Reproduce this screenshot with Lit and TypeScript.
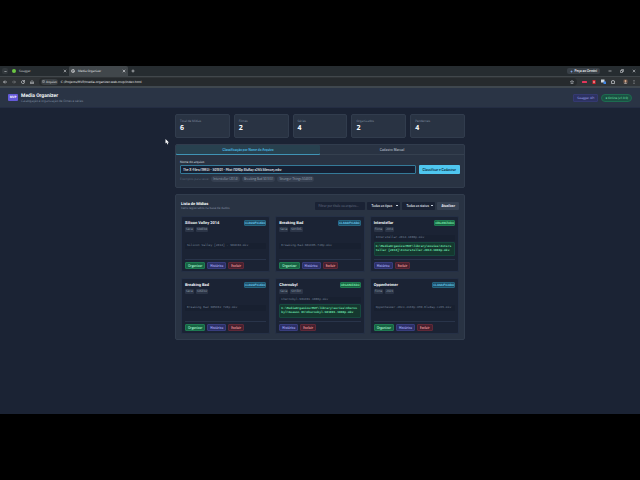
import { LitElement, html, css, svg, nothing } from "lit";
import { customElement, property } from "lit/decorators.js";

interface Media {
  title: string;
  tags: string[];
  file: string;
  path?: string;
}

const MEDIA: Media[] = [
  { title: "Silicon Valley 2014", tags: ["Série", "S04E04"], file: "Silicon Valley [2014] - S04E04.mkv" },
  { title: "Breaking Bad", tags: ["Série", "S01E05"], file: "Breaking.Bad.S01E05.720p.mkv" },
  {
    title: "Interstellar", tags: ["Filme", "2014"], file: "Interstellar.2014.1080p.mkv",
    path: "C:\\MediaOrganizerMVP\\library\\movies\\Interstellar [2014]\\Interstellar.2014.1080p.mkv",
  },
  { title: "Breaking Bad", tags: ["Série", "S05E02"], file: "Breaking Bad S05E02 720p.mkv" },
  {
    title: "Chernobyl", tags: ["Série", "S01E01"], file: "Chernobyl.S01E01.1080p.mkv",
    path: "C:\\MediaOrganizerMVP\\library\\series\\Chernobyl\\Season 01\\Chernobyl.S01E01.1080p.mkv",
  },
  { title: "Oppenheimer", tags: ["Filme", "2023"], file: "Oppenheimer.2023.2160p.UHD.BluRay.x265.mkv" },
];

const STATS: [string, number][] = [
  ["Total de Mídias", 6], ["Filmes", 2], ["Séries", 4], ["Organizados", 2], ["Pendentes", 4],
];

const reset = css`
  * { box-sizing: border-box; margin: 0; }
  button, input, select { font-family: inherit; font-size: 3px; line-height: 4px; color: inherit; border: 0; border-radius: 1px; padding: 0; background: none; }
  button { white-space: nowrap; }
  svg { display: block; fill: none; stroke: currentColor; flex: none; }
`;

@customElement("browser-chrome")
class BrowserChrome extends LitElement {
  static styles = [reset, css`
    :host { display: block; color: #c9ccd0; font-size: 3px; line-height: 4px; }
    .strip { display: flex; align-items: center; height: 10px; background: #262c30; padding: 0 4px 0 2px; }
    .drop { width: 6px; height: 6px; border-radius: 2px; background: #33393d; display: grid; place-items: center; margin-right: 2px; }
    .tab { display: flex; align-items: center; gap: 3px; width: 59px; height: 10px; padding: 0 2px; border-radius: 2px 2px 0 0; }
    .tab.on { background: #41474b; color: #e8eaed; }
    .tab .name { flex: 1; }
    .plus { margin-left: 3px; }
    .gemini { margin-left: auto; display: flex; align-items: center; gap: 2px; height: 6px; padding: 0 3px; border-radius: 2px; background: #394047; color: #f0f2f4; font-family: Inter, sans-serif; font-weight: 600; }
    .window { display: flex; gap: 8px; margin-left: 8px; }
    .bar { display: flex; align-items: center; height: 12px; background: #303437; padding: 0 5px 0 3px; gap: 5px; border-top: 1px solid #41474b; border-bottom: 2px solid #3f474e; }
    .address { flex: 1; display: flex; align-items: center; height: 8px; padding: 0 3px 0 2px; gap: 3px; border-radius: 4px; background: #262a2d; }
    .chip { display: flex; align-items: center; gap: 1px; height: 6px; padding: 0 1px; border-radius: 3px; background: #3a3f43; color: #e8eaed; }
    .url { flex: 1; color: #e8eaed; font-family: "DejaVu Sans", sans-serif; }
    .profile { margin-left: 3px; }
  `];

  render() {
    return html`
      <div class="strip">
        <button class="drop" aria-label="Pesquisar guias"><svg width="3" height="3" viewBox="0 0 6 6"><path d="M1 2l2 2 2-2" stroke-width="1.4"/></svg></button>
        <div class="tab">
          <svg width="4" height="4" viewBox="0 0 8 8"><circle cx="4" cy="4" r="4" fill="#6cc644" stroke="none"/></svg>
          <span class="name">Swagger</span>${this.cross()}
        </div>
        <div class="tab on">
          <svg width="4" height="4" viewBox="0 0 8 8"><circle cx="4" cy="4" r="3.2"/><path d="M1 4h3l1-3M4 7V5h3"/></svg>
          <span class="name">Media Organizer</span>${this.cross()}
        </div>
        <button class="plus" aria-label="Nova guia"><svg width="4" height="4" viewBox="0 0 8 8"><path d="M4 1v6M1 4h6" stroke-width="1.4"/></svg></button>
        <button class="gemini"><svg width="3" height="3" viewBox="0 0 8 8"><path d="M4 0l1 3 3 1-3 1-1 3-1-3-3-1 3-1z" fill="#7ea6f4" stroke="none"/></svg>Peça ao Gemini</button>
        <div class="window">
          <svg width="4" height="4" viewBox="0 0 8 8"><path d="M1 4h6" stroke-width="1.4"/></svg>
          <svg width="4" height="4" viewBox="0 0 8 8"><path d="M1 3h4v4H1zM3 3V1h4v4H5" stroke-width="1.2"/></svg>
          ${this.cross()}
        </div>
      </div>
      <div class="bar">
        <svg width="4" height="4" viewBox="0 0 8 8"><path d="M8 4H1M4 1L1 4l3 3" stroke-width="1.4"/></svg>
        <svg width="4" height="4" viewBox="0 0 8 8" opacity=".5"><path d="M0 4h7M4 1l3 3-3 3" stroke-width="1.4"/></svg>
        <svg width="4" height="4" viewBox="0 0 8 8"><path d="M7 4a3 3 0 1 1-1-2.200M7 0v3H4" stroke-width="1.4"/></svg>
        <svg width="4" height="4" viewBox="0 0 8 8"><path d="M1 4l3-3 3 3v3.500H5V5H3v2.500H1z" stroke-width="1.200"/></svg>
        <div class="address">
          <span class="chip"><svg width="3" height="3" viewBox="0 0 8 8"><circle cx="4" cy="4" r="3.2"/><path d="M4 2v1M4 4v2"/></svg>Arquivo</span>
          <span class="url">C:/Projects/MVP/media-organizer-web-mvp/index.html</span>
          <svg width="4" height="4" viewBox="0 0 8 8"><path d="M4 .5l1 2.500 2.500.2-2 1.700.6 2.600L4 6.200 1.900 7.500l.6-2.600-2-1.700L3 3z"/></svg>
        </div>
        <svg width="5" height="4" viewBox="0 0 10 8"><rect x="0" y="2" width="10" height="4" rx="1" fill="#e2365b" stroke="none"/></svg>
        <svg width="4" height="4" viewBox="0 0 8 8"><path d="M1 0h6v8H1z" fill="#d9232e" stroke="none"/><path d="M4 2v4" stroke="#fff" stroke-width="1.500"/></svg>
        <svg width="5" height="5" viewBox="0 0 10 10"><path d="M0 1h7v6H0z" fill="#cfd6dd" stroke="none"/><path d="M5 5h5v5H5z" fill="#3f86e8" stroke="none"/></svg>
        <svg width="4" height="4" viewBox="0 0 8 8"><path d="M1 2h2V1h2v1h2v5H1z" stroke-width="1.400"/></svg>
        <svg class="profile" width="5" height="5" viewBox="0 0 10 10"><circle cx="5" cy="5" r="5" fill="#5b4a42" stroke="none"/><circle cx="5" cy="4" r="2" fill="#e0b090" stroke="none"/><path d="M2 9q3-4 6 0z" fill="#ddd" stroke="none"/></svg>
        <svg width="2" height="4" viewBox="0 0 4 8"><path d="M2 0v1.500M2 3.200v1.500M2 6.500V8" stroke-width="1.500"/></svg>
      </div>`;
  }

  private cross() {
    return html`<svg width="4" height="4" viewBox="0 0 8 8">${svg`<path d="M1.500 1.500l5 5M6.500 1.500l-5 5" stroke-width="1.200"/>`}</svg>`;
  }
}

@customElement("media-card")
class MediaCard extends LitElement {
  @property({ attribute: false }) media!: Media;

  static styles = [reset, css`
    :host { display: flex; flex-direction: column; min-width: 0; min-height: 56px; padding: 3px 3px 2px; border: 1px solid #253046; border-radius: 2px; background: #1b2334; }
    .top { display: flex; justify-content: space-between; align-items: center; height: 5px; }
    h3 { font-family: Roboto, sans-serif; font-size: 4px; line-height: 5px; font-weight: 700; color: #f1f5f9; }
    .badge { border: 1px solid #256580; border-radius: 1px; background: #1c4a62; color: #6fd3f7; font-family: Roboto, sans-serif; line-height: 4px; font-weight: 600; }
    .badge.done { border-color: #1d7a50; background: #17613f; color: #7ff0b4; }
    .tags { display: flex; gap: 2px; margin-top: 2px; }
    .tags span { padding: 0 1px; border-radius: 1px; background: #2b3446; color: #9aa5b5; line-height: 5px; }
    .files { flex: 1; display: flex; flex-direction: column; justify-content: center; gap: 1px; font-family: "Liberation Mono", monospace; }
    .file { padding: 1px 2px; border-radius: 1px; background: #182030; color: #77849a; white-space: nowrap; }
    .path { padding: 2px 1px; border: 1px solid #17483f; border-radius: 1px; background: #15382f; color: #6ee7b0; font-weight: 700; word-break: break-all; }
    .actions { display: flex; gap: 2px; padding-top: 2px; border-top: 1px solid #29344a; }
    .actions button { height: 7px; padding: 0 2px; border-width: 1px; border-style: solid; font-weight: 600; }
    .actions .go { background: #176343; border-color: #1f7a52; color: #a7f3d0; }
    .actions .log { background: #2c2f66; border-color: #383d7d; color: #aeb4fb; }
    .actions .del { background: #47202f; border-color: #5f2837; color: #fca5a5; }
  `];

  render() {
    const m = this.media;
    return html`
      <div class="top">
        <h3>${m.title}</h3>
        <span class="badge ${m.path ? "done" : ""}">${m.path ? "ORGANIZADO" : "CLASSIFICADO"}</span>
      </div>
      <div class="tags">${m.tags.map((t) => html`<span>${t}</span>`)}</div>
      <div class="files">
        <div class="file">${m.file}</div>
        ${m.path ? html`<div class="path">${m.path}</div>` : nothing}
      </div>
      <div class="actions">
        ${m.path ? nothing : html`<button class="go">Organizar</button>`}
        <button class="log">Histórico</button>
        <button class="del">Excluir</button>
      </div>`;
  }
}

@customElement("app-root")
class AppRoot extends LitElement {
  static styles = [reset, css`
    :host { box-sizing: border-box; display: flex; flex-direction: column; min-height: 100vh; padding: 66px 0; background: #000; font-family: "Open Sans", "Noto Sans", sans-serif; font-size: 3px; line-height: 4px; color: #e2e8f0; text-rendering: geometricPrecision; }
    .page { flex: 1; display: flex; flex-direction: column; background: #1b2334; }
    header { display: flex; align-items: center; gap: 3px; height: 20px; padding: 0 8px; background: #2a3445; border-bottom: 1px solid #242d43; }
    .logo { width: 10px; height: 7px; border-radius: 1px; background: #6459d8; color: #fff; font-weight: 700; line-height: 7px; text-align: center; }
    h1 { font-family: Roboto, sans-serif; font-size: 5px; line-height: 6px; font-weight: 700; color: #f8fafc; }
    .muted { color: #8491a5; }
    .right { margin-left: auto; display: flex; gap: 3px; }
    .swagger { padding: 0 3px; border: 1px solid #343970; border-radius: 1px; background: #2d3262; color: #a5acf5; line-height: 6px; text-decoration: none; }
    .online { padding: 0 3px; border: 1px solid #1d6b50; border-radius: 4px; background: #1b5143; color: #6ee7b0; line-height: 6px; }
    main { width: 100%; max-width: 290px; margin: 0 auto; padding: 6px 0; display: flex; flex-direction: column; gap: 6px; position: relative; }
    .stats { display: grid; grid-template-columns: repeat(5, 1fr); gap: 4px; }
    .box { background: #293343; border: 1px solid #313c4d; border-radius: 2px; }
    .stat { height: 24px; padding: 4px; }
    .stat b { display: block; font-size: 7px; line-height: 8px; margin-top: 2px; color: #f8fafc; }
    .tabs { display: grid; grid-template-columns: 1fr 1fr; border-bottom: 1px solid #35404f; }
    .tabs button { height: 9px; font-family: Inter, sans-serif; font-weight: 600; color: #a3adbb; }
    .tabs .on { color: #4dc3ee; background: #28414f; box-shadow: 0 1px #4094b5; }
    form { padding: 5px 4px 0; height: 32px; }
    .entry { display: flex; gap: 3px; margin: 1px 0 2px; font-family: Inter, sans-serif; }
    .entry input { flex: 1; min-width: 0; height: 9px; padding: 0 2px; border: 1px solid #357a99; background: #162033; color: #f1f5f9; font-weight: 600; }
    .entry button { padding: 0 4px; background: #4fc6ef; color: #10344a; font-weight: 700; }
    .examples { display: flex; align-items: center; gap: 2px; }
    .examples span { color: #59667a; }
    .examples button { padding: 0 2px; height: 6px; border-radius: 3px; background: #353f50; color: #9aa5b5; }
    .library { padding: 5px; }
    .head { display: flex; align-items: center; gap: 2px; height: 11px; margin-bottom: 5px; }
    .head div { flex: 1; }
    h2 { font-family: Roboto, sans-serif; font-size: 4px; line-height: 5px; font-weight: 700; color: #f8fafc; }
    .head input, .head select { height: 8px; background: #1a2234; }
    .head input { width: 50px; padding: 0 3px; }
    .head input::placeholder { color: #6c788b; opacity: 1; }
    .head select { width: 33px; padding: 0 4px; appearance: none; font-weight: 600; background-image: linear-gradient(#cbd5e1, #cbd5e1); background-size: 2px 1px; background-repeat: no-repeat; background-position: right 2px center; }
    .head button { height: 8px; padding: 0 4px; background: #364152; font-weight: 700; }
    .grid { display: grid; grid-template-columns: repeat(3, minmax(0, 1fr)); gap: 6px 5px; }
    .cursor { position: absolute; left: -10px; top: 31px; stroke: none; }
  `];

  render() {
    return html`
      <browser-chrome></browser-chrome>
      <div class="page">
        <header>
          <span class="logo">MVP</span>
          <div><h1>Media Organizer</h1><p class="muted">Catalogação e organização de filmes e séries</p></div>
          <div class="right"><a class="swagger" href="#swagger">Swagger API</a><span class="online">● Online (v1.0.0)</span></div>
        </header>
        <main>
          <svg class="cursor" width="4" height="6" viewBox="0 0 8 12"><path d="M1 0v9l2-2 2 4 1.500-1L5 7h3z" fill="#fff"/></svg>
          <section class="stats">
            ${STATS.map(([label, n]) => html`<div class="box stat"><span class="muted">${label}</span><b>${n}</b></div>`)}
          </section>
          <section class="box">
            <div class="tabs"><button class="on">Classificação por Nome do Arquivo</button><button>Cadastro Manual</button></div>
            <form @submit=${(e: Event) => e.preventDefault()}>
              <label for="name">Nome do arquivo</label>
              <div class="entry">
                <input id="name" .value=${"The X-Files (1993) - S01E01 - Pilot (1080p BluRay x265 Silence).mkv"}>
                <button>Classificar e Cadastrar</button>
              </div>
              <div class="examples"><span>Exemplos para teste:</span>
                ${["Interstellar (2014)", "Breaking Bad S01E01", "Stranger Things S04E09"].map((x) => html`<button type="button">${x}</button>`)}
              </div>
            </form>
          </section>
          <section class="box library">
            <div class="head">
              <div><h2>Lista de Mídias</h2><p class="muted">Itens registrados na base de dados</p></div>
              <input aria-label="Filtrar" placeholder="Filtrar por título ou arquivo...">
              <select aria-label="Tipo"><option>Todos os tipos</option></select>
              <select aria-label="Status"><option>Todos os status</option></select>
              <button>Atualizar</button>
            </div>
            <div class="grid">${MEDIA.map((m) => html`<media-card .media=${m}></media-card>`)}</div>
          </section>
        </main>
      </div>`;
  }
}
